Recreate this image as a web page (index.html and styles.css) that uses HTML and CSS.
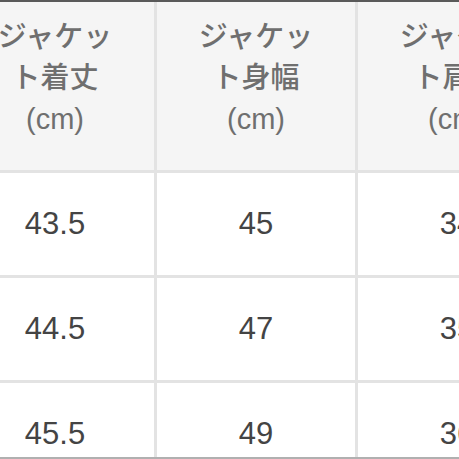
FILE: index.html
```html
<!DOCTYPE html>
<html lang="ja">
<head>
<meta charset="utf-8">
<link rel="stylesheet" href="styles.css">
</head>
<body>
<div class="frame">
  <div class="grid">
    <div class="cell head"><span>ジャケッ<br>ト着丈<br>(cm)</span></div>
    <div class="cell head"><span>ジャケッ<br>ト身幅<br>(cm)</span></div>
    <div class="cell head"><span>ジャケッ<br>ト肩幅<br>(cm)</span></div>
    <div class="cell">43.5</div>
    <div class="cell">45</div>
    <div class="cell">34</div>
    <div class="cell">44.5</div>
    <div class="cell">47</div>
    <div class="cell">35</div>
    <div class="cell">45.5</div>
    <div class="cell">49</div>
    <div class="cell">36</div>
  </div>
</div>
</body>
</html>
```
FILE: styles.css
```css
html, body {
  margin: 0;
  padding: 0;
  background: #fff;
}
.frame {
  width: 459px;
  height: 459px;
  box-sizing: border-box;
  border-top: 2px solid #5a5a5a;
  border-bottom: 2px solid #b0b0b0;
  overflow: hidden;
}
.grid {
  margin-left: -44px;
  display: grid;
  grid-template-columns: 198px 198px 198px;
  grid-template-rows: 168px 102px 102px 102px;
  gap: 3px;
  background: #e3e3e3;
  width: max-content;
}
.cell {
  background: #fff;
  display: flex;
  align-items: center;
  justify-content: center;
  font-family: "Liberation Sans", Arial, sans-serif;
  font-size: 31px;
  color: #444;
}
.cell.head {
  background: #f5f5f5;
  color: #6f6f6f;
  font-family: "Liberation Sans", "Noto Sans CJK JP", sans-serif;
  font-weight: 500;
  font-size: 29px;
  line-height: 41px;
  text-align: center;
  padding-bottom: 16px;
  box-sizing: border-box;
}
```
